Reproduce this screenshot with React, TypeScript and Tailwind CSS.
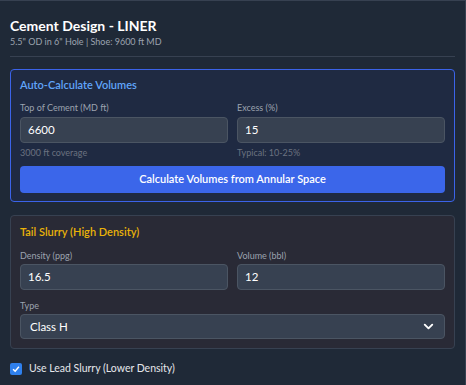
import { ChevronDown } from 'lucide-react'

function Field({ label, value, hint, mb = 'mb-[2px]' }: { label: string; value: string; hint?: string; mb?: string }) {
  return (
    <div className="flex flex-col">
      <label className={`text-[9px] leading-[14px] text-[#9ca3af] ${mb}`}>{label}</label>
      <div className="h-[26px] rounded-[4px] border border-[#4b5563] bg-[#374151] px-[7px] flex items-center text-[11.5px] text-white">
        {value}
      </div>
      {hint && <span className="mt-[3px] text-[9px] leading-[14px] text-[#6b7280]">{hint}</span>}
    </div>
  )
}

export default function App() {
  return (
    <div
      className="w-[466px] h-[385px] bg-[#1f2937] border-t border-r border-[#374151] px-[10px] pt-[16px] overflow-hidden"
      style={{ fontFamily: 'Lato, "Noto Sans", sans-serif' }}
    >
      {/* Header */}
      <div className="pb-[7px] border-b border-[#374151]">
        <h2 className="text-[14px] leading-[18px] font-bold text-white">Cement Design - LINER</h2>
        <p className="text-[9px] leading-[14px] text-[#9ca3af]">5.5" OD in 6" Hole | Shoe: 9600 ft MD</p>
      </div>

      {/* Auto-calculate */}
      <div className="mt-[12px] rounded-[4px] border border-[#3b63e8] bg-[#1f2a42] px-[9px] pt-[6px] pb-[8px]">
        <h3 className="text-[11px] leading-[18px] font-semibold text-[#60a5fa]">Auto-Calculate Volumes</h3>
        <div className="mt-[7px] grid grid-cols-2 gap-[9px]">
          <Field label="Top of Cement (MD ft)" value="6600" hint="3000 ft coverage" />
          <Field label="Excess (%)" value="15" hint="Typical: 10-25%" />
        </div>
        <button className="mt-[6px] w-full h-[27px] rounded-[4px] bg-[#3b66ea] text-white text-[11px] font-semibold">
          Calculate Volumes from Annular Space
        </button>
      </div>

      {/* Tail slurry */}
      <div className="mt-[13px] rounded-[4px] border border-[#374151] bg-[#292a36] px-[9px] pt-[7px] pb-[9px]">
        <h3 className="text-[11px] leading-[18px] font-semibold text-[#eab308]">Tail Slurry (High Density)</h3>
        <div className="mt-[8px] grid grid-cols-2 gap-[9px]">
          <Field label="Density (ppg)" value="16.5" mb="mb-[1px]" />
          <Field label="Volume (bbl)" value="12" mb="mb-[1px]" />
        </div>
        <div className="mt-[9px] flex flex-col">
          <label className="text-[9px] leading-[14px] text-[#9ca3af] mb-[1px]">Type</label>
          <div className="h-[25px] rounded-[4px] border border-[#4b5563] bg-[#374151] pl-[9px] pr-[8px] flex items-center justify-between text-[11.5px] text-white">
            <span>Class H</span>
            <ChevronDown className="w-[15px] h-[15px]" strokeWidth={3} />
          </div>
        </div>
      </div>

      {/* Lead slurry */}
      <label className="mt-[12px] h-[16px] flex items-center gap-[7px]">
        <span className="w-[12px] h-[12px] rounded-[2px] bg-[#2f80ed] flex items-center justify-center">
          <svg viewBox="0 0 12 12" className="w-[10px] h-[10px]">
            <path d="M2.5 6.2 L5 8.6 L9.5 3.4" fill="none" stroke="white" strokeWidth="1.8" />
          </svg>
        </span>
        <span className="text-[10.5px] text-[#e5e7eb]">Use Lead Slurry (Lower Density)</span>
      </label>
    </div>
  )
}
